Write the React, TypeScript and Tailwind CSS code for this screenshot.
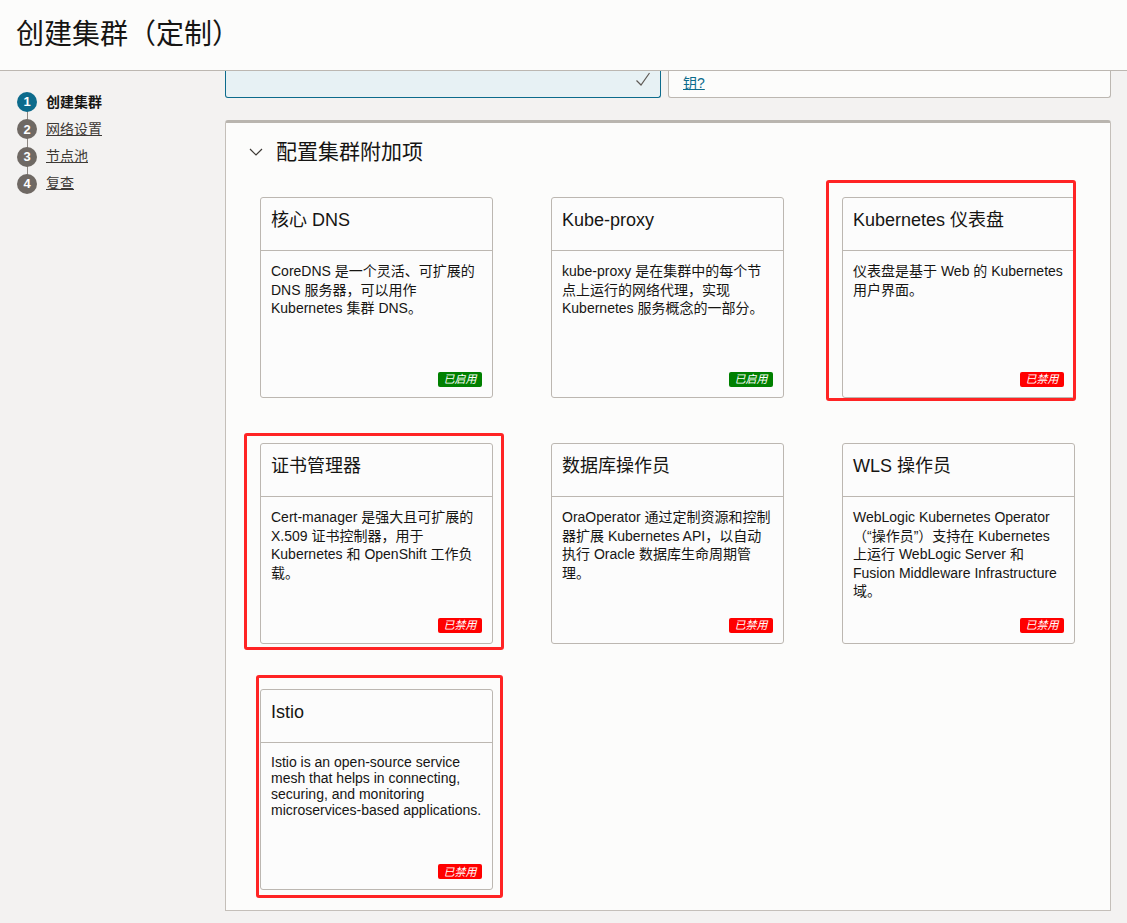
import React from "react";

const FONT = { fontFamily: '"Liberation Sans", Arial, "Noto Sans CJK SC", sans-serif' };

type Card = {
  title: string;
  body: string;
  enabled: boolean;
  latin?: boolean;
  outline?: string;
};

const cards: Card[] = [
  {
    title: "核心 DNS",
    body: "CoreDNS 是一个灵活、可扩展的 DNS 服务器，可以用作 Kubernetes 集群 DNS。",
    enabled: true,
  },
  {
    title: "Kube-proxy",
    body: "kube-proxy 是在集群中的每个节点上运行的网络代理，实现 Kubernetes 服务概念的一部分。",
    enabled: true,
  },
  {
    title: "Kubernetes 仪表盘",
    body: "仪表盘是基于 Web 的 Kubernetes 用户界面。",
    enabled: false,
    outline: "-left-[16px] -top-[17px] -right-[1px] -bottom-[3px]",
  },
  {
    title: "证书管理器",
    body: "Cert-manager 是强大且可扩展的 X.509 证书控制器，用于 Kubernetes 和 OpenShift 工作负载。",
    enabled: false,
    outline: "-left-[16px] -top-[10px] -right-[11px] -bottom-[6px]",
  },
  {
    title: "数据库操作员",
    body: "OraOperator 通过定制资源和控制器扩展 Kubernetes API，以自动执行 Oracle 数据库生命周期管理。",
    enabled: false,
  },
  {
    title: "WLS 操作员",
    body: "WebLogic Kubernetes Operator（“操作员”）支持在 Kubernetes 上运行 WebLogic Server 和 Fusion Middleware Infrastructure 域。",
    enabled: false,
  },
  {
    title: "Istio",
    body: "Istio is an open-source service mesh that helps in connecting, securing, and monitoring microservices-based applications.",
    enabled: false,
    latin: true,
    outline: "-left-[4px] -top-[14px] -right-[10px] -bottom-[8px]",
  },
];

function AddonCard({ c }: { c: Card }) {
  return (
    <div className="relative h-[201px]">
      {c.outline && (
        <div
          className={`pointer-events-none absolute ${c.outline} rounded-[3px] border-[3px] border-[#ff2424]`}
        />
      )}
      <div className="flex h-full flex-col rounded-[3px] border border-[#bcb7b1] bg-[#fcfcfc]">
        <div className="h-[53px] border-b border-[#bcb7b1] px-[10px] pt-[10px] text-[18px] leading-[24px] text-[#161513]">
          {c.title}
        </div>
        <div
          className={`relative flex-1 px-[10px] pt-[11px] text-[14px] text-[#161513] ${
            c.latin ? "leading-[16px]" : "leading-[18.5px]"
          }`}
        >
          {c.body}
          <div
            className={`absolute bottom-[10px] right-[10px] flex h-[15px] w-[44px] items-center justify-center rounded-[2px] text-[11px] italic text-white ${
              c.enabled ? "bg-[#008000]" : "bg-[#ff0000]"
            }`}
          >
            {c.enabled ? "已启用" : "已禁用"}
          </div>
        </div>
      </div>
    </div>
  );
}

const steps = [
  { n: 1, label: "创建集群", active: true },
  { n: 2, label: "网络设置", active: false },
  { n: 3, label: "节点池", active: false },
  { n: 4, label: "复查", active: false },
];

export default function App() {
  return (
    <div className="flex h-[923px] w-[1127px] flex-col overflow-hidden bg-[#f3f2f1]" style={FONT}>
      <div className="flex h-[71px] shrink-0 items-center border-b border-[#bcb7b1] bg-[#fcfcfb] pl-[16px]">
        <h1 className="text-[28px] leading-none text-[#161513]" style={{ marginTop: -1 }}>
          创建集群（定制）
        </h1>
      </div>
      <div className="flex flex-1">
        <div className="w-[225px] shrink-0 pl-[17px] pt-[21px]">
          <div className="relative flex flex-col gap-[7.33px]">
            <div className="absolute left-[9.5px] top-[10px] h-[80px] w-px bg-[#8d8781]" />
            {steps.map((s) => (
              <div key={s.n} className="relative flex h-[20px] items-center">
                <div
                  className={`flex h-[20px] w-[20px] items-center justify-center rounded-full text-[13px] font-bold text-white ${
                    s.active ? "bg-[#0c6b8c]" : "bg-[#6f6964]"
                  }`}
                >
                  {s.n}
                </div>
                <span
                  className={`ml-[9px] text-[14px] ${
                    s.active ? "font-bold text-[#161513]" : "text-[#3d3935] underline"
                  }`}
                >
                  {s.label}
                </span>
              </div>
            ))}
          </div>
        </div>
        <div className="flex w-[886px] flex-col">
          <div className="flex h-[27px] gap-[7px]">
            <div className="relative h-full w-[436px] rounded-b-[3px] border border-t-0 border-[#0c6b8c] bg-[#e7f1f4]">
              <svg
                className="absolute right-[9px] top-[1px]"
                width="16"
                height="14"
                viewBox="0 0 16 14"
                fill="none"
              >
                <path d="M1.5 8.5 L6 13 L14.5 1" stroke="#5f5a55" strokeWidth="1.2" />
              </svg>
            </div>
            <div className="h-full flex-1 rounded-b-[3px] border border-t-0 border-[#bcb7b1] bg-[#fcfcfb] pl-[14px]">
              <span className="text-[14px] leading-[14px] text-[#0c6b8c] underline">钥?</span>
            </div>
          </div>
          <div className="mt-[22px] h-[791px] rounded-t-[3px] border border-t-[3px] border-[#c4bfb9] border-t-[#b9b5af] bg-[#fcfcfb] pl-[23px] pt-[14px]">
            <div className="flex h-[30px] items-center">
              <svg width="14" height="9" viewBox="0 0 14 9" fill="none" className="mr-[13px]">
                <path d="M1 1 L7 7 L13 1" stroke="#3d3935" strokeWidth="1.2" />
              </svg>
              <span className="text-[21px] text-[#161513]">配置集群附加项</span>
            </div>
            <div className="ml-[11px] mt-[30px] grid grid-cols-[233px_233px_233px] gap-x-[58px] gap-y-[45px]">
              {cards.map((c) => (
                <AddonCard key={c.title} c={c} />
              ))}
            </div>
          </div>
        </div>
      </div>
    </div>
  );
}
